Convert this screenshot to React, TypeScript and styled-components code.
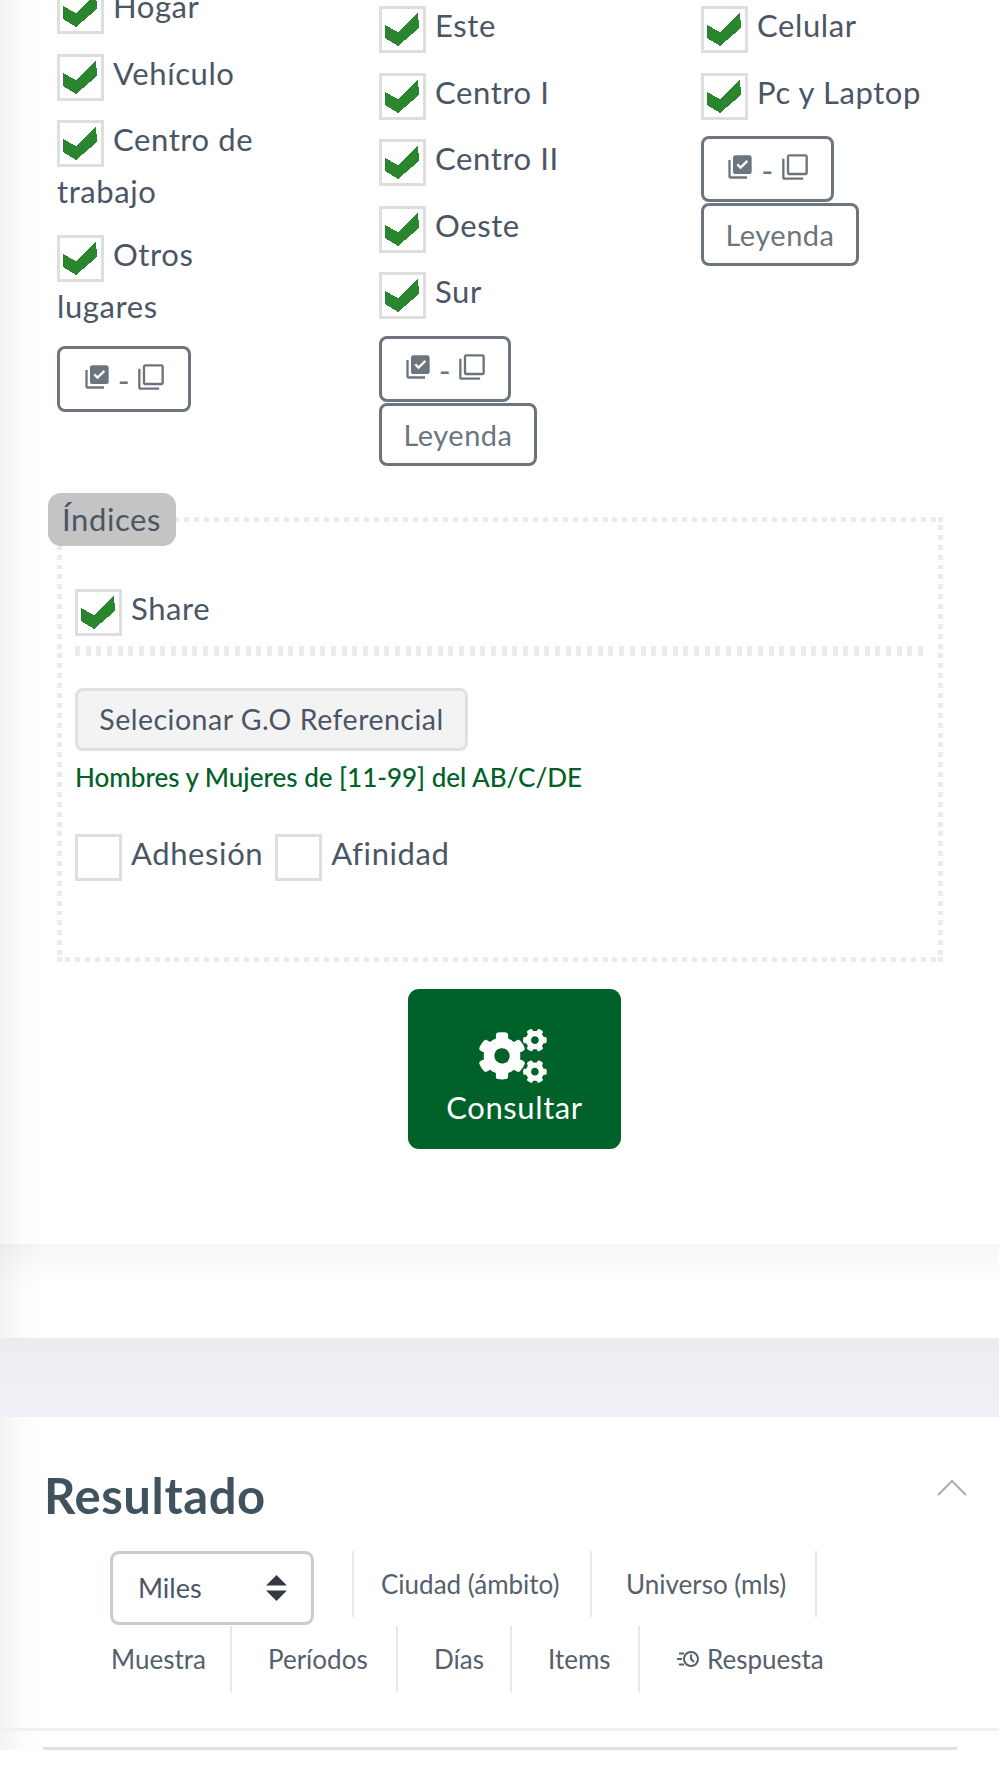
import React from "react";
import styled, { createGlobalStyle } from "styled-components";
import { MdLibraryAddCheck, MdFilterNone } from "react-icons/md";
import { FaCogs } from "react-icons/fa";

const Global = createGlobalStyle`
  html, body { margin: 0; padding: 0; height: 1778px; overflow: hidden; background: #fff; }
  body { font-family: "Lato", "Noto Sans", sans-serif; color: #4a5666; }
  * { box-sizing: border-box; }
`;

const dots = encodeURIComponent(
  '<svg xmlns="http://www.w3.org/2000/svg" width="20" height="20" fill="#ebebeb"><path d="M0 0h5v5H0zM15 0h5v5h-5zM0 15h5v5H0zM15 15h5v5h-5zM8 0h5v5H8zM8 15h5v5H8zM0 8h5v5H0zM15 8h5v5h-5z"/></svg>'
);

const Page = styled.div`
  width: 1000px;
  margin-top: -17px;
  background: linear-gradient(90deg, #f3f3f3 0, #fbfbfb 22px, #fff 42px);
`;
const Columns = styled.div`
  display: grid;
  grid-template-columns: 322px 322px 299px;
  padding-left: 57px;
`;
const Column = styled.div<{ $offset?: number }>`
  padding-top: ${(p) => p.$offset ?? 0}px;
`;
const CheckRow = styled.label`
  display: block;
  font-size: 31px;
  letter-spacing: 0.6px;
  line-height: 47px;
  margin-bottom: 19.5px;
`;
const Continuation = styled.span`
  display: block;
  padding-top: 5px;
  margin-bottom: -4px;
`;
const Box = styled.span`
  display: inline-block;
  width: 47px;
  height: 47px;
  border: 3px solid #dedede;
  background: #fff;
  vertical-align: top;
  margin-right: 9px;
  position: relative;
  top: 4px;
`;
const CheckMark = styled.svg`
  display: block;
  width: 47px;
  height: 47px;
  margin: -3px;
`;
const Stack = styled.div`
  margin-top: 20.5px;
`;
const OutlineButton = styled.button`
  display: block;
  font: inherit;
  font-size: 29px;
  letter-spacing: 0.5px;
  color: #6c757d;
  background: #fff;
  border: 3px solid #6c757d;
  border-radius: 8px;
  padding: 0;
  & + & { margin-top: 1px; }
`;
const IconButton = styled(OutlineButton)<{ $w: number }>`
  width: ${(p) => p.$w}px;
  height: 66px;
  display: flex;
  align-items: center;
  justify-content: center;
  padding-bottom: 4px;
`;
const LegendButton = styled(OutlineButton)`
  width: 158px;
  height: 63px;
`;
const Dash = styled.span`
  margin: 0 7px;
  font-size: 32px;
  line-height: 1;
  position: relative;
  top: 4px;
`;
const Fieldset = styled.fieldset`
  margin: 27px 0 0 57px;
  padding: 52.5px 13px 80px;
  width: 886px;
  border: 5px solid transparent;
  border-image: url("data:image/svg+xml,${dots}") 5 round;
  min-width: 0;
`;
const Legend = styled.legend`
  margin: 0 5px -13.5px -27px;
  padding: 0 14px;
  width: 128px;
  height: 53px;
  line-height: 53px;
  font-size: 31px;
  letter-spacing: 0.6px;
  background: #c4c4c4;
  border-radius: 13px;
  white-space: nowrap;
`;
const DottedRule = styled.div`
  height: 10px;
  margin: 14px 0 32px;
  background: repeating-linear-gradient(90deg, #ebebeb 0 5px, transparent 5px 10.67px);
`;
const ShareRow = styled(CheckRow)`
  margin: 0;
`;
const GreyButton = styled.button`
  display: block;
  width: 393px;
  height: 63px;
  font: inherit;
  font-size: 28.5px;
  letter-spacing: 0.5px;
  color: #4a5666;
  background: #f3f3f3;
  border: 3px solid #e0e0e0;
  border-radius: 8px;
  padding: 0;
`;
const GreenNote = styled.div`
  margin-top: 9px;
  font-size: 26px;
  line-height: 34px;
  font-weight: 500;
  color: #006129;
`;
const InlineChecks = styled.div`
  display: flex;
  margin-top: 36px;
  gap: 12px;
`;
const InlineCheck = styled.label`
  font-size: 31px;
  letter-spacing: 0.6px;
  line-height: 47px;
  white-space: nowrap;
`;
const Consultar = styled.button`
  display: flex;
  flex-direction: column;
  align-items: center;
  justify-content: flex-start;
  width: 213px;
  height: 160px;
  margin: 27px 0 0 408px;
  padding: 40px 0 0;
  background: #006129;
  color: #fff;
  border: 0;
  border-radius: 11px;
  font: inherit;
  font-size: 31px;
  letter-spacing: 0.6px;
  line-height: 44px;
`;
const CogIcon = styled(FaCogs)`
  display: block;
  height: 54px;
  width: 68px;
  margin: 0 3px 2px 0;
`;
const FadeBand = styled.div`
  height: 94px;
  margin: 95px 1px 0 0;
  background: linear-gradient(180deg, rgba(0, 0, 0, 0.035) 0, rgba(0, 0, 0, 0.012) 26px, transparent 44px);
`;
const GreyBand = styled.div`
  height: 79px;
  margin-right: 1px;
  background: linear-gradient(180deg, #eaeaef 0, #eeeff4 40%, #eef0f5 100%);
`;
const ResultHeader = styled.div`
  display: flex;
  justify-content: space-between;
  align-items: flex-start;
  padding: 50px 33px 0 44px;
`;
const Title = styled.h2`
  margin: 0;
  font-size: 49px;
  letter-spacing: 0.6px;
  line-height: 56px;
  font-weight: 700;
  color: #3f525e;
`;
const Chevron = styled.svg`
  display: block;
  width: 30px;
  height: 16px;
  margin-top: 13px;
`;
const StatsRow = styled.div<{ $h: number; $top: number }>`
  display: flex;
  align-items: flex-start;
  height: ${(p) => p.$h}px;
  margin-top: ${(p) => p.$top}px;
  padding-left: 110px;
`;
const SelectCell = styled.div`
  width: 244px;
  height: 66px;
  border-right: 2px solid #e8e8e8;
`;
const SelectBox = styled.div`
  width: 204px;
  height: 74px;
  display: flex;
  align-items: center;
  justify-content: space-between;
  padding: 0 24px 0 25px;
  background: #fff;
  border: 3px solid #c6cbd6;
  border-radius: 9px;
  font-size: 27px;
`;
const Stat = styled.div<{ $w: number; $pad: number; $last?: boolean }>`
  width: ${(p) => p.$w}px;
  height: 66px;
  display: flex;
  align-items: center;
  padding-left: ${(p) => p.$pad}px;
  gap: 7px;
  font-size: 26px;
  color: #55606c;
  white-space: nowrap;
  border-right: ${(p) => (p.$last ? "0" : "2px solid #e8e8e8")};
`;
const RuleThin = styled.div`
  height: 3px;
  margin-top: 36px;
  background: #f1f1f3;
  margin-right: 1px;
`;
const RuleInset = styled.div`
  height: 3px;
  margin: 16px 43px 0;
  background: #dfe2e8;
`;

const Check = ({ on = true }: { on?: boolean }) => (
  <Box>
    {on && (
      <CheckMark viewBox="0 0 47 47" shapeRendering="crispEdges">
        <polygon points="6,19 19,26 39,6 40,22 19,40 6,32" fill="#2a862e" />
      </CheckMark>
    )}
  </Box>
);

const Toggle = ({ w }: { w: number }) => (
  <IconButton $w={w}>
    <MdLibraryAddCheck size={28} />
    <Dash>-</Dash>
    <MdFilterNone size={28} />
  </IconButton>
);

export default function App() {
  return (
    <Page>
      <Global />
      <Columns>
        <Column>
          <CheckRow><Check />Hogar</CheckRow>
          <CheckRow><Check />Vehículo</CheckRow>
          <CheckRow><Check />Centro de <Continuation>trabajo</Continuation></CheckRow>
          <CheckRow><Check />Otros <Continuation>lugares</Continuation></CheckRow>
          <Stack><Toggle w={134} /></Stack>
        </Column>
        <Column $offset={19}>
          <CheckRow><Check />Este</CheckRow>
          <CheckRow><Check />Centro I</CheckRow>
          <CheckRow><Check />Centro II</CheckRow>
          <CheckRow><Check />Oeste</CheckRow>
          <CheckRow><Check />Sur</CheckRow>
          <Stack>
            <Toggle w={132} />
            <LegendButton>Leyenda</LegendButton>
          </Stack>
        </Column>
        <Column $offset={19}>
          <CheckRow><Check />Celular</CheckRow>
          <CheckRow><Check />Pc y Laptop</CheckRow>
          <Stack>
            <Toggle w={133} />
            <LegendButton>Leyenda</LegendButton>
          </Stack>
        </Column>
      </Columns>

      <Fieldset>
        <Legend>Índices</Legend>
        <ShareRow><Check />Share</ShareRow>
        <DottedRule />
        <GreyButton>Selecionar G.O Referencial</GreyButton>
        <GreenNote>Hombres y Mujeres de [11-99] del AB/C/DE</GreenNote>
        <InlineChecks>
          <InlineCheck><Check on={false} />Adhesión</InlineCheck>
          <InlineCheck><Check on={false} />Afinidad</InlineCheck>
        </InlineChecks>
      </Fieldset>

      <Consultar>
        <CogIcon />
        Consultar
      </Consultar>

      <FadeBand />
      <GreyBand />

      <ResultHeader>
        <Title>Resultado</Title>
        <Chevron viewBox="0 0 30 16">
          <polyline points="1,15 15,1 29,15" fill="none" stroke="#a3adba" strokeWidth="2" />
        </Chevron>
      </ResultHeader>
      <StatsRow $h={75} $top={28}>
        <SelectCell>
          <SelectBox>
            Miles
            <svg width="21" height="26" viewBox="0 0 4 5" aria-hidden="true">
              <path d="M2 0L0 2h4zm0 5L0 3h4z" fill="#343a40" />
            </svg>
          </SelectBox>
        </SelectCell>
        <Stat $w={238} $pad={27}>Ciudad (ámbito)</Stat>
        <Stat $w={225} $pad={34}>Universo (mls)</Stat>
      </StatsRow>
      <StatsRow $h={66} $top={0}>
        <Stat $w={122} $pad={1}>Muestra</Stat>
        <Stat $w={166} $pad={36}>Períodos</Stat>
        <Stat $w={114} $pad={36}>Días</Stat>
        <Stat $w={128} $pad={36}>Items</Stat>
        <Stat $w={240} $pad={36} $last>
          <svg width="24" height="18" viewBox="0 0 24 18" aria-hidden="true" fill="none" stroke="currentColor" strokeWidth="2">
            <circle cx="15" cy="9" r="7" />
            <path d="M15 4.5V9l3 3" />
            <path d="M3 3.5h5M1 9h5M3 14.5h5" />
          </svg>
          Respuesta
        </Stat>
      </StatsRow>
      <RuleThin />
      <RuleInset />
    </Page>
  );
}
